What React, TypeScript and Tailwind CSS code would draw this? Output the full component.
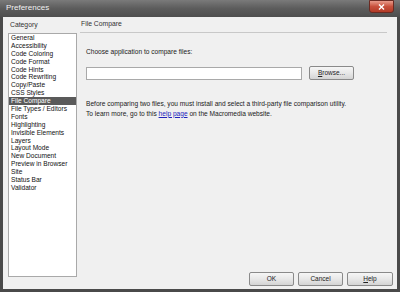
import React from "react";

const items = [
  "General",
  "Accessibility",
  "Code Coloring",
  "Code Format",
  "Code Hints",
  "Code Rewriting",
  "Copy/Paste",
  "CSS Styles",
  "File Compare",
  "File Types / Editors",
  "Fonts",
  "Highlighting",
  "Invisible Elements",
  "Layers",
  "Layout Mode",
  "New Document",
  "Preview in Browser",
  "Site",
  "Status Bar",
  "Validator",
];

function Btn({ children, className = "" }: { children: React.ReactNode; className?: string }) {
  return (
    <div
      className={`flex items-center justify-center h-[14px] rounded-[2px] border border-[#8a8a8a] bg-gradient-to-b from-[#f6f6f6] via-[#e8e8e8] to-[#d4d4d4] text-[6.5px] text-[#222] ${className}`}
    >
      {children}
    </div>
  );
}

export default function App() {
  return (
    <div
      className="w-[400px] h-[292px] flex flex-col bg-[#4a4a4a] overflow-hidden"
      style={{ fontFamily: '"Liberation Sans", Arial, sans-serif' }}
    >
      {/* title bar */}
      <div className="h-[17px] flex items-center relative bg-gradient-to-b from-[#7a7a7a] via-[#5c5c5c] to-[#4e4e4e] shrink-0">
        <span className="ml-[6px] text-[8px] text-[#f2f2f2] leading-none mt-[-1px]">Preferences</span>
        <div className="absolute right-[6px] top-0 w-[25px] h-[13px] rounded-b-[3px] border border-[#6b2a22] bg-gradient-to-b from-[#e89a8a] via-[#c8503c] to-[#b23a26] flex items-center justify-center">
          <svg width="7" height="6" viewBox="0 0 7 6">
            <path d="M1 0.5 L6 5.5 M6 0.5 L1 5.5" stroke="#fff" strokeWidth="1.4" />
          </svg>
        </div>
      </div>
      {/* body */}
      <div className="flex-1 mx-[3px] mb-[3px] bg-[#f0f0f0] flex text-[#1a1a1a]">
        {/* left */}
        <div className="ml-[5px] w-[69px] flex flex-col">
          <div className="h-[16px] flex items-center pl-[2px] text-[6.8px] text-[#333]">Category</div>
          <div className="h-[244px] border border-[#a9a9a9] bg-white pt-[0px]">
            {items.map((it) => (
              <div
                key={it}
                className={`h-[7.9px] leading-[7.9px] text-[6.6px] pl-[2px] whitespace-nowrap ${
                  it === "File Compare" ? "bg-[#5a5a5a] text-white" : "text-[#111]"
                }`}
              >
                {it}
              </div>
            ))}
          </div>
        </div>
        {/* right */}
        <div className="ml-[3px] flex-1 flex flex-col pr-[4px]">
          <div className="h-[16px] flex items-center pl-[1px] text-[6.8px] text-[#333] mr-[6px] border-b border-[#c8c8c8]">
            File Compare
          </div>
          <div className="pl-[6px] flex flex-col">
            <div className="mt-[15px] text-[6.6px] leading-[8px]">Choose application to compare files:</div>
            <div className="mt-[10px] flex items-center">
              <div className="w-[216px] h-[13px] border border-[#a9a9a9] bg-white" />
              <Btn className="ml-[7px] w-[45px] h-[14px]">
                <span>
                  <span className="underline">B</span>rowse...
                </span>
              </Btn>
            </div>
            <div className="mt-[19px] text-[6.6px] leading-[9.5px]">
              <div>Before comparing two files, you must install and select a third-party file comparison utility.</div>
              <div>
                To learn more, go to this{" "}
                <span className="text-[#2222bb] underline">help page</span> on the Macromedia website.
              </div>
            </div>
          </div>
          <div className="flex-1" />
          <div className="flex justify-end gap-[4px] mb-[3px]">
            <Btn className="w-[45px]">OK</Btn>
            <Btn className="w-[45px]">Cancel</Btn>
            <Btn className="w-[46px]">
              <span>
                <span className="underline">H</span>elp
              </span>
            </Btn>
          </div>
        </div>
      </div>
    </div>
  );
}
